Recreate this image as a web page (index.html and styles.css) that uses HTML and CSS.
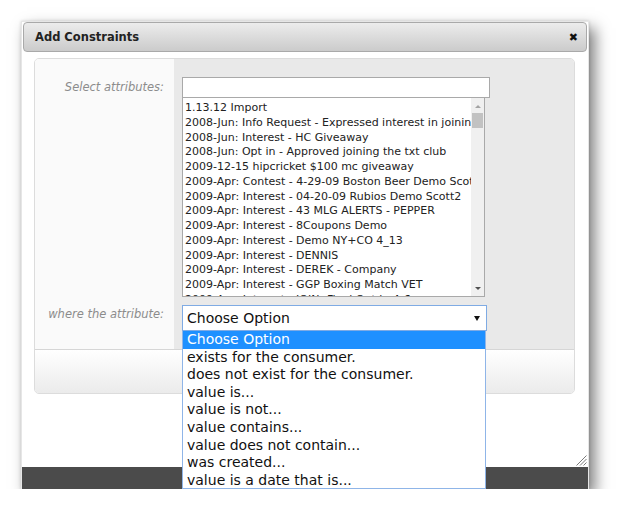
FILE: index.html
```html
<!DOCTYPE html>
<html lang="en">
<head>
    <meta charset="UTF-8">
    <title>Add Constraints</title>
    <link rel="stylesheet" href="styles.css">
</head>
<body>

    <div class="dialog">
        <div class="titlebar">
            <span class="title">Add Constraints</span>
            <span class="close">&#10006;</span>
        </div>

        <div class="content">
            <div class="panel">
                <div class="label first">Select attributes:</div>
                <div class="field first">
                    <div class="search"></div>
                    <div class="listbox">
                        <ul class="items">
                            <li>1.13.12 Import</li>
                            <li>2008-Jun: Info Request - Expressed interest in joining the txt club</li>
                            <li>2008-Jun: Interest - HC Giveaway</li>
                            <li>2008-Jun: Opt in - Approved joining the txt club</li>
                            <li>2009-12-15 hipcricket $100 mc giveaway</li>
                            <li>2009-Apr: Contest - 4-29-09 Boston Beer Demo Scott</li>
                            <li>2009-Apr: Interest - 04-20-09 Rubios Demo Scott2</li>
                            <li>2009-Apr: Interest - 43 MLG ALERTS - PEPPER</li>
                            <li>2009-Apr: Interest - 8Coupons Demo</li>
                            <li>2009-Apr: Interest - Demo NY+CO 4_13</li>
                            <li>2009-Apr: Interest - DENNIS</li>
                            <li>2009-Apr: Interest - DEREK - Company</li>
                            <li>2009-Apr: Interest - GGP Boxing Match VET</li>
                            <li>2009-Apr: Interest - JOIN- Final Opt in 4-6</li>
                        </ul>
                        <div class="scrollbar">
                            <span class="arrow up"></span>
                            <span class="thumb"></span>
                            <span class="arrow down"></span>
                        </div>
                    </div>
                </div>

                <div class="label second">where the attribute:</div>
                <div class="field second">
                    <div class="select">
                        <span>Choose Option</span>
                        <span class="caret"></span>
                    </div>
                </div>

                <div class="footer"></div>
            </div>

            <ul class="popup">
                <li class="selected">Choose Option</li>
                <li>exists for the consumer.</li>
                <li>does not exist for the consumer.</li>
                <li>value is...</li>
                <li>value is not...</li>
                <li>value contains...</li>
                <li>value does not contain...</li>
                <li>was created...</li>
                <li>value is a date that is...</li>
            </ul>

            <svg class="grip" width="11" height="11" viewBox="0 0 11 11">
                <path d="M10.5 0.5 L0.5 10.5 M10.5 4 L4 10.5 M10.5 7.5 L7.5 10.5" stroke="#7a7a7a" stroke-width="1"/>
            </svg>
        </div>

        <div class="bottombar"></div>
    </div>

</body>
</html>
```

FILE: styles.css
```css
body {
    margin: 0;
    padding: 21px 0 0 21px;
    background-color: #ffffff;
    font-family: "DejaVu Sans", Verdana, sans-serif;
}

.dialog {
    width: 568px;
    height: 468px;
    box-sizing: border-box;
    border: 1px solid #e6e6e6;
    border-bottom: none;
    background-color: #ffffff;
    display: flex;
    flex-direction: column;
    box-shadow: 6px 7px 14px rgba(0, 0, 0, 0.5), 0 0 3px rgba(0, 0, 0, 0.15);
}

.titlebar {
    height: 30px;
    box-sizing: border-box;
    margin: 0 1px;
    padding: 0 8px 0 11px;
    border: 1px solid #a9a9a9;
    border-radius: 4px;
    background: linear-gradient(#ececec, #cbcbcb);
    display: flex;
    align-items: center;
    justify-content: space-between;
}

.title {
    font-size: 11.5px;
    font-weight: bold;
    color: #222;
}

.close {
    font-size: 11px;
    color: #111;
}

.content {
    flex: 1;
    padding: 6px 13px 0 12px;
    position: relative;
}

.panel {
    display: grid;
    grid-template-columns: 139px 1fr;
    border: 1px solid #dcdcdc;
    border-radius: 5px;
    overflow: hidden;
}

.label {
    background-color: #fafafa;
    color: #8c8c8c;
    font-size: 11.5px;
    font-style: italic;
    text-align: right;
    padding-right: 10px;
}

.label.first {
    padding-top: 18px;
    line-height: 21px;
}

.label.second {
    padding-top: 8px;
    line-height: 18px;
}

.field {
    background-color: #e9e9e9;
    padding-left: 8px;
}

.field.first {
    padding-top: 18px;
}

.field.second {
    padding-top: 8px;
    padding-bottom: 18px;
}

.search {
    width: 308px;
    height: 21px;
    box-sizing: border-box;
    border: 1px solid #a9a9a9;
    background-color: #fff;
}

.listbox {
    width: 303px;
    height: 199px;
    box-sizing: border-box;
    border: 1px solid #a9a9a9;
    border-top: none;
    background-color: #fff;
    display: flex;
    overflow: hidden;
}

.items {
    flex: 1;
    list-style: none;
    margin: 0;
    padding: 3px 0 0 2px;
    font-size: 11px;
    line-height: 14.75px;
    color: #222;
    white-space: nowrap;
    overflow: hidden;
}

.scrollbar {
    width: 13px;
    background-color: #f0f0f0;
    display: flex;
    flex-direction: column;
    align-items: center;
}

.arrow {
    width: 0;
    height: 0;
    border-left: 3px solid transparent;
    border-right: 3px solid transparent;
}

.arrow.up {
    margin-top: 7px;
    border-bottom: 3px solid #a3a3a3;
}

.arrow.down {
    margin-top: auto;
    margin-bottom: 6px;
    border-top: 3px solid #505050;
}

.thumb {
    width: 11px;
    height: 15px;
    margin-top: 5px;
    background-color: #c2c2c2;
}

.select {
    width: 305px;
    height: 26px;
    box-sizing: border-box;
    border: 1px solid #7fabe4;
    background-color: #fff;
    display: flex;
    align-items: center;
    justify-content: space-between;
    padding: 0 6px 0 4px;
    font-size: 14px;
    color: #111;
}

.caret {
    width: 0;
    height: 0;
    border-left: 3px solid transparent;
    border-right: 3px solid transparent;
    border-top: 5px solid #111;
}

.footer {
    grid-column: 1 / 3;
    height: 43px;
    border-top: 1px solid #d6d6d6;
    background: linear-gradient(#ffffff, #ebebeb);
}

.popup {
    position: absolute;
    left: 160px;
    top: 279px;
    width: 304px;
    height: 158px;
    box-sizing: border-box;
    margin: 0;
    padding: 0;
    list-style: none;
    border: 1px solid #8fb5e8;
    border-top: none;
    background-color: #fff;
    font-size: 14px;
    line-height: 17.6px;
    color: #111;
    overflow: hidden;
}

.popup li {
    padding-left: 4px;
    white-space: nowrap;
}

.popup li.selected {
    background-color: #1e90ff;
    color: #fff;
}

.grip {
    position: absolute;
    right: 1px;
    bottom: 1px;
}

.bottombar {
    height: 22px;
    background-color: #4b4b4b;
}
```
